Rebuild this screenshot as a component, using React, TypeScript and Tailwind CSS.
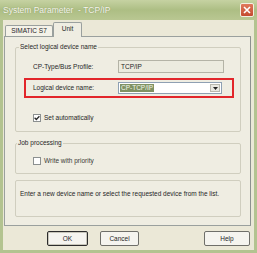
import React from "react";

function CheckBox({ checked }: { checked?: boolean }) {
  return (
    <div className="w-[8px] h-[8px] border border-[#8c9090] bg-white flex items-center justify-center">
      {checked && (
        <svg width="6" height="6" viewBox="0 0 6 6">
          <path d="M0.6 2.8 L2.3 4.5 L5.4 1.2" stroke="#2a2a2a" strokeWidth="1.3" fill="none" />
        </svg>
      )}
    </div>
  );
}

export default function App() {
  return (
    <div className="w-[257px] h-[253px] bg-[#b3c390] flex flex-col overflow-hidden font-['Liberation_Sans',Arial,sans-serif] text-[6.5px] leading-[8px] text-[#262626]">
      {/* title bar */}
      <div className="h-[20px] shrink-0 flex items-center justify-between pl-[3px] pr-[3px] bg-gradient-to-b from-[#c6d2a2] via-[#adbe84] to-[#b9c792]">
        <span className="text-[8.5px] leading-[10px] text-[#f7f7ee] [text-shadow:0_0_1px_#7d8c5a]">
          System Parameter&nbsp; - TCP/IP
        </span>
        <div className="w-[14px] h-[14px] rounded-[2px] border border-[#f3eee2] bg-gradient-to-b from-[#e0795c] to-[#c44a2f] flex items-center justify-center">
          <svg width="8" height="8" viewBox="0 0 8 8">
            <path d="M1 1 L7 7 M7 1 L1 7" stroke="#fff" strokeWidth="1.6" />
          </svg>
        </div>
      </div>

      {/* body */}
      <div className="flex-1 mx-[3px] mb-[3px] bg-[#ebe8d7] flex flex-col pl-[1px] pr-[3px]">
        {/* tabs */}
        <div className="h-[16px] shrink-0 flex items-end">
          <div className="ml-[1px] w-[48px] h-[11px] border border-b-0 border-[#9aa09e] bg-[#f4f2e8] rounded-t-[2px] flex items-center justify-center">
            SIMATIC S7
          </div>
          <div className="relative z-10 -mb-[1px] w-[29px] h-[15px] border border-b-0 border-[#9aa09e] bg-[#efede2] rounded-t-[2px] flex items-start justify-center pt-[2px]">
            Unit
          </div>
        </div>

        {/* panel */}
        <div className="h-[190px] shrink-0 border border-[#9aa09e] border-r-[#8d918f] bg-[#efede2] pt-[6px] pl-[10px] pr-[9px]">
          <fieldset className="border border-[#d0cebf] rounded-[2px] pb-[9px]">
            <legend className="ml-[3px] px-[1px]">Select logical device name</legend>
            <div className="mt-[9px] h-[13px] flex items-center pl-[17px]">
              <span className="w-[85px]">CP-Type/Bus Profile:</span>
              <div className="w-[106px] h-[13px] border border-[#b4b3a6] bg-[#ecebdf] flex items-center pl-[2px]">
                TCP/IP
              </div>
            </div>
            <div className="mt-[5px] ml-[8px] w-[210px] h-[20px] border-2 border-[#e2262b] flex items-center pl-[7px]">
              <span className="w-[85px]">Logical device name:</span>
              <div className="w-[104px] h-[12px] border border-[#8fa0b3] bg-white flex items-center pl-[1px]">
                <span className="bg-[#7f9263] text-[#f4f6ea] px-[1px]">CP-TCP/IP</span>
                <div className="ml-auto mr-[1px] w-[10px] h-[8px] bg-[#e9e8e1] border border-[#b9b8ae] flex items-center justify-center">
                  <svg width="5" height="3" viewBox="0 0 5 3">
                    <path d="M0 0 H5 L2.5 3 Z" fill="#222" />
                  </svg>
                </div>
              </div>
            </div>
            <div className="mt-[16px] h-[8px] flex items-center gap-[3px] pl-[17px]">
              <CheckBox checked />
              <span>Set automatically</span>
            </div>
          </fieldset>

          <fieldset className="mt-[7px] border border-[#d0cebf] rounded-[2px] pb-[8px]">
            <legend className="ml-[1px] px-[1px]">Job processing</legend>
            <div className="mt-[10px] h-[8px] flex items-center gap-[3px] pl-[17px]">
              <CheckBox />
              <span className="text-[#3a3a36]">Write with priority</span>
            </div>
          </fieldset>

          <div className="mt-[6px] h-[37px] border border-[#d0cebf] rounded-[2px] pt-[9px] pl-[4px]">
            Enter a new device name or select the requested device from the list.
          </div>
        </div>

        {/* buttons */}
        <div className="mt-[5px] h-[15px] shrink-0 flex">
          <button className="ml-[43px] w-[41px] h-[15px] border border-[#2d2d2d] rounded-[2px] bg-[#f5f4ef] shadow-[inset_0_0_0_1px_#c9c7bb]">
            OK
          </button>
          <button className="ml-[12px] w-[39px] h-[15px] border border-[#6f6f6a] rounded-[2px] bg-[#f5f4ef]">
            Cancel
          </button>
          <button className="ml-auto mr-[1px] w-[46px] h-[15px] border border-[#6f6f6a] rounded-[2px] bg-[#f5f4ef]">
            Help
          </button>
        </div>
      </div>
    </div>
  );
}
